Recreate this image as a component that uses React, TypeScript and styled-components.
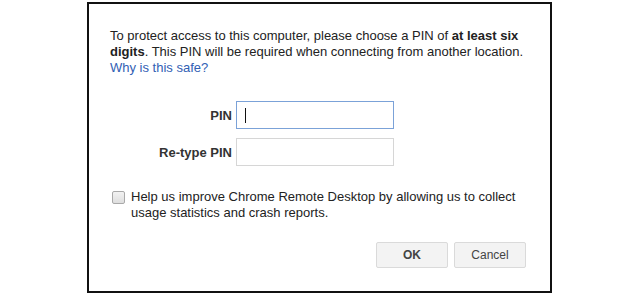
import React from "react";
import styled, { createGlobalStyle } from "styled-components";

const GlobalStyle = createGlobalStyle`
  html, body {
    margin: 0;
    padding: 0;
    background: #ffffff;
  }
  body {
    font-family: "Liberation Sans", Arial, sans-serif;
    font-size: 13px;
    color: #222;
  }
`;

const Page = styled.div`
  width: 640px;
  height: 295px;
  padding: 2px 0 0 87px;
  box-sizing: border-box;
`;

const Dialog = styled.div`
  width: 465px;
  height: 291px;
  box-sizing: border-box;
  border: 2px solid #111;
  padding: 24px 24px 0 21px;
  display: flex;
  flex-direction: column;
`;

const Intro = styled.p`
  margin: 0;
  line-height: 16px;
  color: #222;
`;

const Link = styled.a`
  color: #3160b4;
  text-decoration: none;
`;

const Form = styled.div`
  margin-top: 25px;
  display: grid;
  grid-template-columns: 122px 158px;
  column-gap: 4px;
  row-gap: 9px;
  align-items: center;
`;

const Label = styled.label`
  text-align: right;
  font-weight: bold;
  color: #333;
`;

const Field = styled.div<{ $focused?: boolean }>`
  position: relative;
  height: 28px;
  box-sizing: border-box;
  border: 1px solid ${(p) => (p.$focused ? "#7ba2d8" : "#d6d6d6")};
  background: #fff;
`;

const Input = styled.input`
  width: 100%;
  height: 100%;
  box-sizing: border-box;
  border: none;
  outline: none;
  padding: 0 8px;
  font: inherit;
  background: transparent;
`;

const Caret = styled.span`
  position: absolute;
  left: 8px;
  top: 6px;
  width: 1px;
  height: 15px;
  background: #111;
`;

const CheckRow = styled.label`
  margin-top: 23px;
  display: flex;
  align-items: flex-start;
  gap: 6px;
  line-height: 16px;
  color: #222;
`;

const Box = styled.span`
  flex: none;
  width: 11px;
  height: 11px;
  margin: 2px 0 0 2px;
  border: 1px solid #a9a9a9;
  border-radius: 2px;
  background: linear-gradient(#f2f2f2, #dedede);
`;

const Buttons = styled.div`
  margin-top: 21px;
  display: flex;
  justify-content: flex-end;
  gap: 6px;
`;

const Button = styled.button<{ $primary?: boolean }>`
  width: 72px;
  height: 26px;
  box-sizing: border-box;
  border: 1px solid #dadada;
  border-radius: 2px;
  background: #f3f3f3;
  color: #444;
  font-family: "Liberation Sans", Arial, sans-serif;
  font-size: 12px;
  font-weight: ${(p) => (p.$primary ? "bold" : "normal")};
  padding: 0;
`;

export default function App() {
  return (
    <>
      <GlobalStyle />
      <Page>
        <Dialog>
          <Intro>
            To protect access to this computer, please choose a PIN of{" "}
            <b>at least six</b>
            <br />
            <b>digits</b>. This PIN will be required when connecting from
            another location.
            <br />
            <Link href="#">Why is this safe?</Link>
          </Intro>
          <Form>
            <Label>PIN</Label>
            <Field $focused>
              <Input type="password" />
              <Caret />
            </Field>
            <Label>Re-type PIN</Label>
            <Field>
              <Input type="password" />
            </Field>
          </Form>
          <CheckRow>
            <Box />
            <span>
              Help us improve Chrome Remote Desktop by allowing us to collect
              usage statistics and crash reports.
            </span>
          </CheckRow>
          <Buttons>
            <Button $primary>OK</Button>
            <Button>Cancel</Button>
          </Buttons>
        </Dialog>
      </Page>
    </>
  );
}
